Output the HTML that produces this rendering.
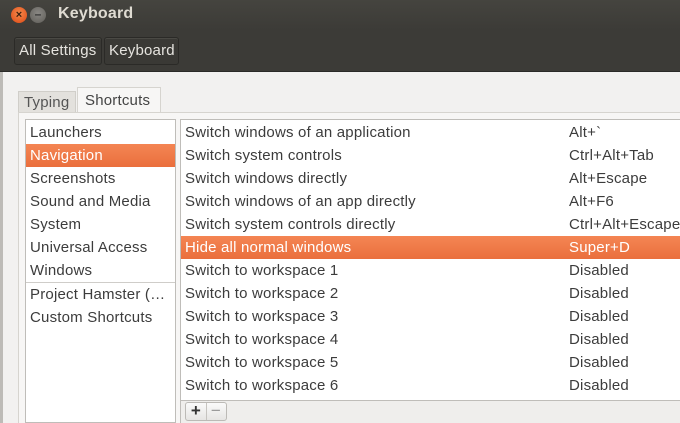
<!DOCTYPE html>
<html><head><style>
*{margin:0;padding:0;box-sizing:border-box}
body{width:680px;height:423px;overflow:hidden;background:#f2f1f0;font-family:"Liberation Sans","DejaVu Sans",sans-serif;font-size:15px;letter-spacing:0.2px;color:#3c3c3c;position:relative}
.abs{position:absolute}
#title{left:0;top:0;width:680px;height:30px;background:linear-gradient(#45443f,#3c3b37);}
#tool{left:0;top:30px;width:680px;height:42px;background:#3c3b37;border-bottom:1px solid #2a2a28}
.btn{position:absolute;top:37px;height:28px;background:#3a3935;border:1px solid #2b2a27;border-radius:3px;color:#e6e4df;font-size:15px;line-height:26px;padding:0 4px;box-shadow:inset 0 1px 0 #4a4944}
.row{height:23px;line-height:23px;padding-left:4px;white-space:nowrap}
.sel{background:linear-gradient(#f48553,#ea6f3d);color:#fff}
.k{position:absolute;left:388px}
</style></head><body>
<div id="title" class="abs">
 <div class="abs" style="left:11px;top:7px;width:16px;height:16px;border-radius:50%;background:radial-gradient(circle at 50% 40%,#f58a4c,#dd4814);color:#3a2010;font-size:11px;line-height:16px;text-align:center;font-weight:bold;letter-spacing:0">×</div>
 <div class="abs" style="left:30px;top:7px;width:16px;height:16px;border-radius:50%;background:radial-gradient(circle at 50% 40%,#8a8884,#5f5d58);color:#333;font-size:12px;line-height:15px;text-align:center;font-weight:bold;letter-spacing:0">–</div>
 <div class="abs" style="left:58px;top:5px;color:#dfdbd2;font-weight:bold;font-size:16px">Keyboard</div>
</div>
<div id="tool" class="abs"></div>
<div class="btn" style="left:14px;width:88px">All Settings</div>
<div class="btn" style="left:104px;width:75px">Keyboard</div>
<div class="abs" style="left:0;top:72px;width:3px;height:351px;background:#bdbbb7"></div>
<div class="abs" style="left:18px;top:91px;width:58px;height:22px;background:#e3e1dd;border:1px solid #d0cec9;border-bottom:none;font-size:15px;padding-left:5px;line-height:22px;color:#555">Typing</div>
<div class="abs" style="left:77px;top:87px;width:84px;height:26px;background:#f7f6f5;border:1px solid #d6d4cf;border-bottom:none;font-size:15px;padding-left:7px;line-height:26px;color:#444">Shortcuts</div>
<div class="abs" style="left:18px;top:112px;width:662px;height:311px;background:#f7f6f5;border-top:1px solid #d6d4cf;border-left:1px solid #d6d4cf"></div>
<div class="abs" style="left:25px;top:119px;width:151px;height:304px;background:#fff;border:1px solid #bfbdb9;padding-top:1px">
 <div class="row">Launchers</div>
 <div class="row sel">Navigation</div>
 <div class="row">Screenshots</div>
 <div class="row">Sound and Media</div>
 <div class="row">System</div>
 <div class="row">Universal Access</div>
 <div class="row">Windows</div>
 <div style="height:1px;background:#cfcdc9"></div>
 <div class="row">Project Hamster (…</div>
 <div class="row">Custom Shortcuts</div>
</div>
<div class="abs" style="left:180px;top:119px;width:500px;height:282px;background:#fff;border:1px solid #bfbdb9;border-right:none;padding-top:1px">
 <div class="row">Switch windows of an application<span class="k">Alt+`</span></div>
 <div class="row">Switch system controls<span class="k">Ctrl+Alt+Tab</span></div>
 <div class="row">Switch windows directly<span class="k">Alt+Escape</span></div>
 <div class="row">Switch windows of an app directly<span class="k">Alt+F6</span></div>
 <div class="row">Switch system controls directly<span class="k">Ctrl+Alt+Escape</span></div>
 <div class="row sel" style="position:relative">Hide all normal windows<span class="k">Super+D</span></div>
 <div class="row">Switch to workspace 1<span class="k">Disabled</span></div>
 <div class="row">Switch to workspace 2<span class="k">Disabled</span></div>
 <div class="row">Switch to workspace 3<span class="k">Disabled</span></div>
 <div class="row">Switch to workspace 4<span class="k">Disabled</span></div>
 <div class="row">Switch to workspace 5<span class="k">Disabled</span></div>
 <div class="row">Switch to workspace 6<span class="k">Disabled</span></div>
</div>
<div class="abs" style="left:180px;top:400px;width:500px;height:23px;background:#efeeec;border-left:1px solid #bfbdb9;border-top:1px solid #bfbdb9"></div>
<div class="abs" style="left:185px;top:402px;width:42px;height:19px;border:1px solid #bcbab6;border-radius:3px;background:linear-gradient(#fafafa,#e6e5e3)"></div>
<div class="abs" style="left:206px;top:403px;width:1px;height:17px;background:#c6c4c0"></div>
<div class="abs" style="left:188px;top:401px;width:16px;text-align:center;font-size:17px;font-weight:bold;color:#333;line-height:20px">+</div>
<div class="abs" style="left:208px;top:401px;width:16px;text-align:center;font-size:17px;color:#999;line-height:20px">−</div>
</body></html>
